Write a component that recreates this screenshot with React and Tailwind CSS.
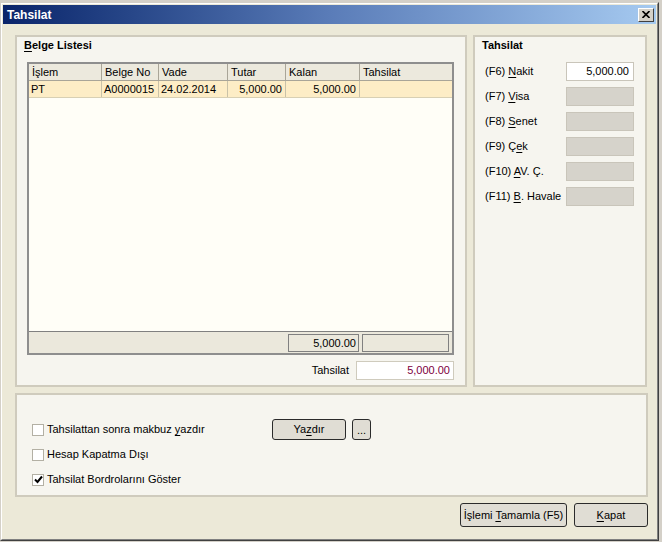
import React from 'react';

const cols = [
  { title: 'İşlem', w: 'w-[73px]', value: 'PT', align: 'text-left' },
  { title: 'Belge No', w: 'w-[57px]', value: 'A0000015', align: 'text-left' },
  { title: 'Vade', w: 'w-[69px]', value: '24.02.2014', align: 'text-left' },
  { title: 'Tutar', w: 'w-[58px]', value: '5,000.00', align: 'text-right' },
  { title: 'Kalan', w: 'w-[74px]', value: '5,000.00', align: 'text-right' },
  { title: 'Tahsilat', w: 'w-[92px]', value: '', align: 'text-right' },
];

function PayRow({ code, pre, hot, post, value, disabled }) {
  return (
    <div className="flex items-center h-[19px] mb-[6px]">
      <div className="w-[91px] pl-[10px] whitespace-nowrap">
        {code} {pre}<u className="underline-offset-2">{hot}</u>{post}
      </div>
      <div
        className={
          disabled
            ? 'w-[68px] h-[19px] bg-[#d6d3cb] border border-[#c9c5ba]'
            : 'w-[68px] h-[19px] bg-white border border-[#c9c5ba] text-right pr-[4px] leading-[17px]'
        }
      >
        {value}
      </div>
    </div>
  );
}

function CheckRow({ checked, children }) {
  return (
    <div className="flex items-center w-[240px]">
      <div className="w-[12px] h-[12px] border border-[#b3b0a4] bg-white flex items-center justify-center">
        {checked && (
          <svg width="9" height="9" viewBox="0 0 9 9">
            <path d="M1 4.5 L3.5 7 L8 1.5" stroke="#000" strokeWidth="2" fill="none" />
          </svg>
        )}
      </div>
      <span className="ml-[3px] whitespace-nowrap">{children}</span>
    </div>
  );
}

function App() {
  return (
    <div className="w-[662px] h-[542px] bg-[#d4d0c8] overflow-hidden pt-[2px] font-['Liberation_Sans',Arial,sans-serif] text-[11px] text-black">
      {/* window frame */}
      <div className="w-[659px] h-[539px] border border-t-[#d4d0c8] border-l-[#d4d0c8] border-r-[#404040] border-b-[#404040] flex">
        <div className="flex-1 border border-t-white border-l-white border-r-[#808080] border-b-[#808080] bg-[#ece9d8] p-[1px] flex flex-col">
          {/* title bar */}
          <div className="h-[19px] bg-gradient-to-r from-[#0a246a] via-[#5a7cb8] to-[#a6caf0] flex items-center justify-between pl-[4px] pr-[2px]">
            <span className="text-white font-bold text-[12px]">Tahsilat</span>
            <div className="w-[16px] h-[14px] bg-[#d4d0c8] border border-t-white border-l-white border-r-[#404040] border-b-[#404040] flex items-center justify-center">
              <svg width="8" height="7" viewBox="0 0 8 7">
                <path d="M0.5 0 L7.5 7 M7.5 0 L0.5 7" stroke="#000" strokeWidth="1.6" />
              </svg>
            </div>
          </div>

          {/* content */}
          <div className="flex-1 flex flex-col pl-[12px] pr-[8px] pt-[11px] pb-[10px]">
            <div className="flex gap-[6px] h-[352px]">
              {/* Belge Listesi */}
              <div className="w-[452px] border-2 border-[#cfcbbd] bg-[#f6f5ef] pt-[2px] flex flex-col">
                <div className="pl-[7px] font-bold leading-[13px]">
                  <u className="underline-offset-2">B</u>elge Listesi
                </div>
                <div className="ml-[10px] mt-[10px] w-[427px] h-[293px] border-2 border-[#8e8e8e] bg-[#fffef7] flex flex-col">
                  <div className="flex h-[17px] bg-[#ece9dd] border-b border-[#a9a598]">
                    {cols.map((c) => (
                      <div key={c.title} className={`${c.w} border-r border-[#a9a598] pl-[3px] leading-[16px] whitespace-nowrap last:border-r-0`}>
                        {c.title}
                      </div>
                    ))}
                  </div>
                  <div className="flex h-[17px] bg-[#fdedc6] border-b border-[#d8d0b4]">
                    {cols.map((c) => (
                      <div key={c.title} className={`${c.w} ${c.align} border-r border-[#c9c2a8] px-[3px] pl-[2px] leading-[16px] whitespace-nowrap last:border-r-0`}>
                        {c.value}
                      </div>
                    ))}
                  </div>
                  <div className="flex-1" />
                  <div className="h-[22px] bg-[#ebe8dc] border-t border-[#808080] flex justify-end items-start pt-[2px] pr-[3px] gap-[3px]">
                    <div className="w-[71px] h-[18px] border border-[#808080] text-right pr-[2px] leading-[16px]">5,000.00</div>
                    <div className="w-[87px] h-[18px] border border-[#808080]" />
                  </div>
                </div>
                <div className="flex items-center justify-end mt-[6px] mr-[11px] gap-[7px]">
                  <span>Tahsilat</span>
                  <div className="w-[98px] h-[19px] bg-white border border-[#cfcbbd] text-right pr-[3px] leading-[17px] text-[#7d0040]">5,000.00</div>
                </div>
              </div>

              {/* Tahsilat */}
              <div className="w-[174px] border-2 border-[#cfcbbd] bg-[#f6f5ef] pt-[2px] flex flex-col">
                <div className="pl-[7px] font-bold leading-[13px]">Tahsilat</div>
                <div className="mt-[10px]">
                  <PayRow code="(F6)" hot="N" post="akit" value="5,000.00" />
                  <PayRow code="(F7)" hot="V" post="isa" disabled />
                  <PayRow code="(F8)" hot="S" post="enet" disabled />
                  <PayRow code="(F9)" pre="Ç" hot="e" post="k" disabled />
                  <PayRow code="(F10)" hot="A" post="V. Ç." disabled />
                  <PayRow code="(F11)" hot="B" post=". Havale" disabled />
                </div>
              </div>
            </div>

            {/* options */}
            <div className="mt-[6px] h-[104px] border-2 border-[#cfcbbd] bg-[#f6f5ef] pt-[24px] pl-[15px] flex flex-col gap-[4px]">
              <div className="flex items-center h-[21px]">
                <CheckRow>
                  Tahsilattan sonra makbuz <u className="underline-offset-2">y</u>azdır
                </CheckRow>
                <button className="w-[74px] h-[21px] bg-[#e0ddd4] border border-[#2b2b2b] rounded-[3px] font-normal">
                  Ya<u className="underline-offset-2">z</u>dır
                </button>
                <button className="ml-[6px] w-[19px] h-[21px] bg-[#e0ddd4] border border-[#2b2b2b] rounded-[3px] leading-[14px] font-normal">...</button>
              </div>
              <div className="flex items-center h-[21px]">
                <CheckRow>Hesap Kapatma Dışı</CheckRow>
              </div>
              <div className="flex items-center h-[21px]">
                <CheckRow checked>Tahsilat Bordrolarını Göster</CheckRow>
              </div>
            </div>

            {/* buttons */}
            <div className="mt-[6px] flex justify-end gap-[7px]">
              <button className="w-[107px] h-[24px] bg-[#e0ddd4] border border-[#2b2b2b] rounded-[3px] font-normal">
                İşlemi <u className="underline-offset-2">T</u>amamla (F5)
              </button>
              <button className="w-[74px] h-[24px] bg-[#e0ddd4] border border-[#2b2b2b] rounded-[3px] font-normal">
                <u className="underline-offset-2">K</u>apat
              </button>
            </div>
          </div>
        </div>
      </div>
    </div>
  );
}

export default App;
